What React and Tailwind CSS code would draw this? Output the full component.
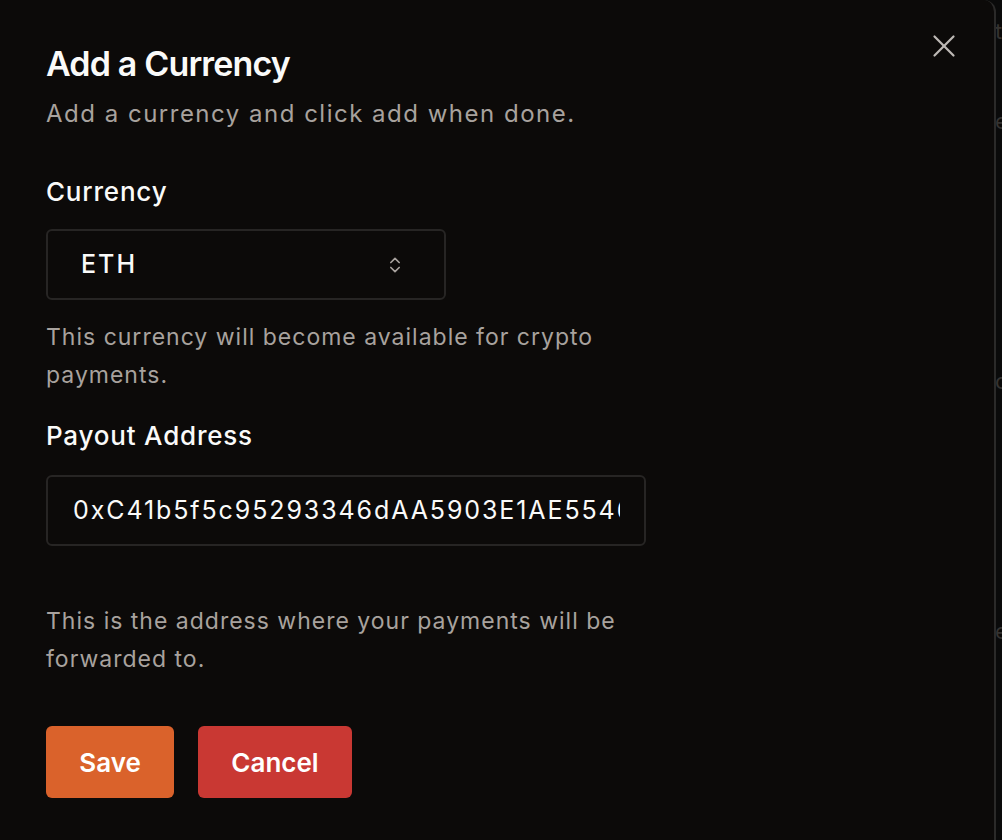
import { X, ChevronsUpDown } from "lucide-react";

const App = () => {
  return (
    <div
      className="w-[1002px] h-[840px] flex bg-[#0a0a0a] overflow-hidden"
      style={{ fontFamily: "Inter, 'Noto Sans', sans-serif" }}
    >
      {/* Sheet */}
      <div className="relative w-[996px] shrink-0 h-full bg-[#0c0a09] border-r-2 border-[#2b2a29] rounded-tr-xl pl-[46px] pt-[39px]">
        <button className="absolute top-[27px] right-[31px] text-[#bdb9b5]">
          <X size={38} strokeWidth={1.4} />
        </button>

        <h2 className="text-[34px] leading-[50px] font-semibold tracking-tight text-[#fafaf9]">
          Add a Currency
        </h2>
        <p className="mt-[2px] text-[24px] leading-[46px] tracking-[1.5px] text-[#a8a29e]">
          Add a currency and click add when done.
        </p>

        {/* Currency */}
        <div className="mt-[37px] w-[400px]">
          <label className="block text-[26px] leading-[36px] font-medium tracking-[0.8px] text-[#fafaf9]">
            Currency
          </label>
          <div className="mt-[19px] h-[71px] border-2 border-[#272524] rounded-md flex items-center justify-between pl-[33px] pr-[39px]">
            <span className="text-[25px] font-medium tracking-[2px] text-[#fafaf9]">ETH</span>
            <ChevronsUpDown size={20} className="text-[#a8a29e]" />
          </div>
          <p className="mt-[18px] text-[23px] leading-[38px] tracking-[1px] text-[#a8a29e] w-[580px]">
            This currency will become available for crypto payments.
          </p>
        </div>

        {/* Payout address */}
        <div className="mt-[24px] w-[600px]">
          <label className="block text-[26px] leading-[36px] font-medium tracking-[0.8px] text-[#fafaf9]">
            Payout Address
          </label>
          <div className="mt-[21px] h-[71px] border-2 border-[#272524] rounded-md flex items-center pl-[25px] pr-[24px] overflow-hidden">
            <span className="text-[25px] tracking-[1.9px] text-[#fafaf9] whitespace-nowrap overflow-hidden">
              0xC41b5f5c95293346dAA5903E1AE5546
            </span>
          </div>
          <p className="mt-[56px] text-[23px] leading-[38px] tracking-[1px] text-[#a8a29e] w-[580px]">
            This is the address where your payments will be forwarded to.
          </p>
        </div>

        {/* Actions */}
        <div className="mt-[48px] flex gap-[24px]">
          <button className="w-[128px] h-[72px] rounded-md bg-[#da622b] text-[26px] font-semibold text-white">
            Save
          </button>
          <button className="w-[154px] h-[72px] rounded-md bg-[#c93833] text-[26px] font-semibold text-white">
            Cancel
          </button>
        </div>
      </div>

      {/* Page behind the overlay */}
      <div className="flex-1 flex flex-col text-[22px] text-[#353331] leading-none pt-[20px] -ml-[1px] overflow-hidden">
        <span className="h-[90px]">t</span>
        <span className="h-[260px]">e</span>
        <span className="h-[250px]">c</span>
        <span>e</span>
      </div>
    </div>
  );
};

export default App;
